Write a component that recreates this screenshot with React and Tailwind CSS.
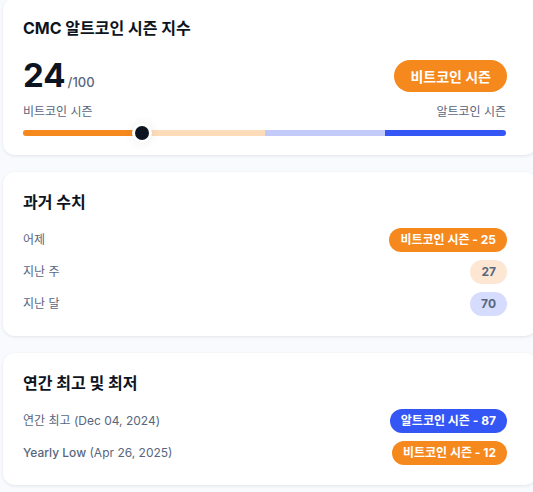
import React from "react";

const FONT = {
  fontFamily: 'Inter, "Noto Sans CJK KR", "Noto Sans", sans-serif',
};

const Card = ({ className = "", children }) => (
  <div
    className={`ml-[3px] w-[534px] shrink-0 rounded-xl bg-white pl-5 pr-[30px] shadow-[0_1px_3px_rgba(88,102,126,0.14)] ${className}`}
  >
    {children}
  </div>
);

const Pill = ({ tone, children }) => {
  const tones = {
    orange: "bg-[#f6891e] text-white",
    blue: "bg-[#3456f5] text-white",
    peach: "bg-[#fde7d3] text-[#58667e]",
    lilac: "bg-[#d6dcfd] text-[#58667e]",
  };
  return (
    <span
      className={`flex h-6 items-center rounded-full px-[11px] text-[12px] font-bold ${tones[tone]}`}
    >
      {children}
    </span>
  );
};

const Row = ({ label, children }) => (
  <div className="flex h-6 items-center justify-between">
    <span className="text-[12px] text-[#58667e]">{label}</span>
    {children}
  </div>
);

const App = () => {
  const score = 24;

  return (
    <div
      className="flex min-h-[492px] w-[533px] flex-col gap-[17px] overflow-hidden bg-[#f8fafd]"
      style={FONT}
    >
      {/* index */}
      <Card className="-mt-[2px] pt-4 pb-3">
        <h2 className="text-base leading-7 font-bold text-[#0d1421]">
          CMC 알트코인 시즌 지수
        </h2>

        <div className="mt-[18px] flex h-8 items-center justify-between">
          <div className="flex items-baseline">
            <span className="text-[33px] leading-none font-bold text-[#0d1421]">
              {score}
            </span>
            <span className="ml-[2px] text-[13px] font-medium text-[#58667e]">
              /100
            </span>
          </div>
          <span className="flex h-8 items-center rounded-full bg-[#f6891e] px-4 text-[14px] font-bold text-white">
            비트코인 시즌
          </span>
        </div>

        <div className="mt-[10px] flex h-5 items-center justify-between pr-[1px] text-[12px] text-[#58667e]">
          <span>비트코인 시즌</span>
          <span>알트코인 시즌</span>
        </div>

        <div className="relative mt-[1px] mr-[1px] flex h-5 items-center">
          <div className="flex h-1.5 w-full overflow-hidden rounded-full">
            <div className="relative w-1/2 bg-[#fcdcb9]">
              <div className="absolute inset-y-0 left-0 w-[48%] bg-[#f6891e]" />
            </div>
            <div className="w-1/4 bg-[#c3cbfa]" />
            <div className="w-1/4 bg-[#3456f5]" />
          </div>
          <div className="absolute top-1/2 left-[24.6%] h-5 w-5 -translate-x-1/2 -translate-y-1/2 rounded-full bg-white shadow-[0_0_8px_rgba(88,102,126,0.12)]">
            <div className="m-[3px] h-[14px] w-[14px] rounded-full bg-[#0d1421]" />
          </div>
        </div>
      </Card>

      {/* history */}
      <Card className="pt-4 pb-5">
        <h2 className="mb-3 text-base leading-7 font-bold text-[#0d1421]">
          과거 수치
        </h2>
        <div className="flex flex-col gap-2">
          <Row label="어제">
            <Pill tone="orange">비트코인 시즌 - 25</Pill>
          </Row>
          <Row label="지난 주">
            <Pill tone="peach">27</Pill>
          </Row>
          <Row label="지난 달">
            <Pill tone="lilac">70</Pill>
          </Row>
        </div>
      </Card>

      {/* yearly */}
      <Card className="pt-4 pb-5">
        <h2 className="mb-3 text-base leading-7 font-bold text-[#0d1421]">
          연간 최고 및 최저
        </h2>
        <div className="flex flex-col gap-2">
          <Row label="연간 최고 (Dec 04, 2024)">
            <Pill tone="blue">알트코인 시즌 - 87</Pill>
          </Row>
          <Row
            label={
              <>
                <span className="font-medium">Yearly Low</span> (Apr 26, 2025)
              </>
            }
          >
            <Pill tone="orange">비트코인 시즌 - 12</Pill>
          </Row>
        </div>
      </Card>
    </div>
  );
};

export default App;
